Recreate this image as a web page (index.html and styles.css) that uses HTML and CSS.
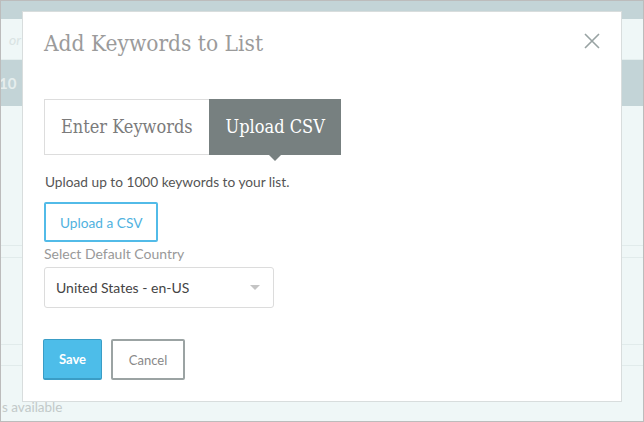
FILE: index.html
```
<!DOCTYPE html>
<html lang="en">
<head>
    <meta charset="UTF-8">
    <meta name="viewport" content="width=device-width, initial-scale=1.0">
    <title>Add Keywords to List</title>
    <link rel="stylesheet" href="styles.css">
</head>
<body>

    <div class="screen">
        <div class="bg-band"></div>
        <div class="bg-row"><span class="hint">or p</span></div>
        <div class="bg-band tall"><span class="count">10</span></div>
        <div class="bg-list">
            <div class="bg-line first"></div>
            <div class="bg-line second"></div>
            <div class="bg-line third"></div>
            <div class="bg-line fourth"></div>
        </div>
        <div class="bg-foot">s available</div>

        <div class="modal">
            <div class="modal-head">
                <h2>Add Keywords to List</h2>
                <button class="close" aria-label="Close">
                    <svg width="16" height="16" viewBox="0 0 16 16">
                        <path d="M1 1 L15 15 M15 1 L1 15" stroke="#98a3a3" stroke-width="1.6" fill="none"/>
                    </svg>
                </button>
            </div>

            <div class="tabs">
                <div class="tab">Enter Keywords</div>
                <div class="tab active">Upload CSV</div>
            </div>

            <p class="note">Upload up to 1000 keywords to your list.</p>
            <button class="upload-btn">Upload a CSV</button>

            <label class="field-label" for="country">Select Default Country</label>
            <div class="select" id="country">
                <span>United States - en-US</span>
                <span class="caret"></span>
            </div>

            <div class="actions">
                <button class="btn save">Save</button>
                <button class="btn cancel">Cancel</button>
            </div>
        </div>
    </div>

</body>
</html>
```

FILE: styles.css
```
body { margin: 0; font-family: "Lato", "Open Sans", sans-serif; }
.screen { position: relative; width: 644px; height: 422px; box-sizing: border-box; border: 1px solid #bcbcbc; background: #eff7f7; overflow: hidden; }

.bg-band { height: 18px; background: #c3d4d7; }
.bg-band.tall { height: 46px; display: flex; align-items: center; }
.bg-row { height: 41px; display: flex; align-items: center; border-bottom: 1px solid #e4eeee; box-sizing: border-box; }
.hint { font-style: italic; color: #d9e3e3; font-size: 14px; padding-left: 8px; }
.count { color: #e6eeee; font-size: 15px; font-weight: 700; margin-left: -2px; }
.bg-list { height: 286px; display: flow-root; }
.bg-line { height: 1px; background: #e1ebeb; }
.bg-line.first { margin-top: 139px; }
.bg-line.second { margin-top: 11px; }
.bg-line.third { margin-top: 86px; }
.bg-line.fourth { margin-top: 20px; }
.bg-foot { color: #c2c9c9; font-size: 13.5px; line-height: 16px; padding-left: 1px; margin-top: 7px; }

.modal { position: absolute; left: 21px; top: 10px; width: 600px; height: 391px; box-sizing: border-box; background: #fff; border: 1px solid #d8dddd; padding: 18px 21px 0 21px; }
.modal-head { display: flex; justify-content: space-between; align-items: flex-start; }
.modal-head h2 { margin: 0; font-family: "DejaVu Serif", serif; font-stretch: condensed; font-weight: normal; font-size: 22.5px; line-height: 27px; color: #9b9b9b; }
.close { border: 0; background: none; padding: 0; margin: 3px 0 0 0; cursor: pointer; line-height: 0; }

.tabs { display: flex; margin-top: 42px; height: 56px; }
.tab { font-family: "DejaVu Serif", serif; font-stretch: condensed; font-size: 18px; line-height: 54px; padding: 0 16px; color: #7b7b7b; border: 1px solid #dddddd; border-right: 0; position: relative; }
.tab.active { background: #778080; color: #fff; border-color: #778080; }
.tab.active::after { content: ""; position: absolute; left: 50%; bottom: -7px; margin-left: -6px; border-top: 6px solid #778080; border-left: 6px solid transparent; border-right: 6px solid transparent; }

.note { margin: 19px 0 0 1px; font-size: 13.7px; line-height: 16px; color: #555; }
.upload-btn { display: block; margin-top: 12px; height: 40px; padding: 0 14px; border: 2px solid #52bbe8; background: #fff; color: #4fb2e0; font-family: "Lato", sans-serif; font-size: 13.7px; border-radius: 2px; cursor: pointer; }

.field-label { display: block; margin-top: 4px; font-size: 14px; line-height: 16px; color: #999; }
.select { display: flex; justify-content: space-between; align-items: center; margin-top: 5px; width: 230px; height: 41px; box-sizing: border-box; border: 1px solid #dcdcdc; border-radius: 3px; padding: 0 13px 0 11px; font-size: 14px; color: #444; }
.caret { width: 0; height: 0; border-top: 5px solid #c4c4c4; border-left: 5px solid transparent; border-right: 5px solid transparent; }

.actions { display: flex; gap: 9px; margin-top: 31px; margin-left: -1px; }
.btn { height: 41px; font-family: "Lato", sans-serif; font-size: 13px; border-radius: 2px; cursor: pointer; box-sizing: border-box; }
.btn.save { width: 59px; background: #4dbde9; color: #fff; font-weight: 700; border: 1px solid #3a9dc6; border-bottom-width: 2px; }
.btn.cancel { width: 74px; background: #fff; color: #888; border: 2px solid #9ba3a3; }
```
